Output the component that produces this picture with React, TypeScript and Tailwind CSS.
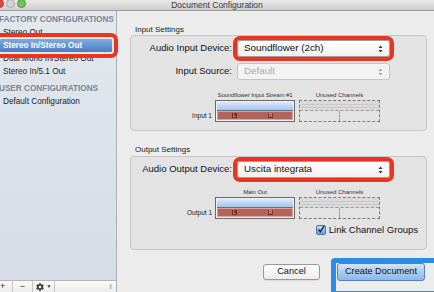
import { FaCog } from "react-icons/fa";

function Arrows() {
  return (
    <svg width="5" height="8" viewBox="0 0 5 8" className="shrink-0">
      <path d="M2.5 0.5 L4.5 3 L0.5 3 Z" fill="#333" />
      <path d="M2.5 7.5 L4.5 5 L0.5 5 Z" fill="#333" />
    </svg>
  );
}

function ChannelBar() {
  return (
    <div className="w-[80px] h-[22px] border border-[#6a6a6a] flex flex-col bg-[#f0f0f0] p-px">
      <div className="h-[9px] bg-gradient-to-b from-[#dbe9f9] to-[#a3c5eb] border-b border-[#5d7190]" />
      <div className="flex-1 bg-[#b4645b] border border-[#d9a39c] flex items-center">
        <span className="ml-[14px] bg-[#6b2f27] text-[#f2d6d2] text-[5px] leading-[5px] px-[1px]">L</span>
        <span className="ml-[31px] bg-[#6b2f27] text-[#f2d6d2] text-[5px] leading-[5px] px-[1px]">R</span>
      </div>
    </div>
  );
}

function UnusedBox() {
  return (
    <div className="w-[81px] h-[22px] border border-dashed border-[#7a7a7a] flex flex-col">
      <div className="h-[10px] bg-[#dadada] border-b border-dashed border-[#9a9a9a] flex flex-col justify-center gap-[2px] px-[1px]">
        <div className="h-px bg-[#c9c9c9]" />
        <div className="h-px bg-[#c9c9c9]" />
      </div>
      <div className="flex-1 flex">
        <div className="w-[40px] border-r border-dashed border-[#9a9a9a]" />
        <div className="flex-1" />
      </div>
    </div>
  );
}

function Channels({ title, label }: { title: string; label: string }) {
  return (
    <div className="flex flex-col">
      <div className="flex text-[6px] leading-[10px] text-[#333]">
        <div className="w-[81px]" />
        <div className="ml-[3px] w-[80px] text-center whitespace-nowrap tracking-[-0.1px]">{title}</div>
        <div className="ml-[4px] w-[81px] text-center">Unused Channels</div>
      </div>
      <div className="flex items-end">
        <div className="w-[81px] text-right text-[6.5px] leading-[8px] pb-[2px] text-[#222]">{label}</div>
        <div className="ml-[3px]">
          <ChannelBar />
        </div>
        <div className="ml-[4px]">
          <UnusedBox />
        </div>
      </div>
    </div>
  );
}

function Select({ value, disabled, highlight, width }: { value: string; disabled?: boolean; highlight?: boolean; width: string }) {
  return (
    <div
      className={`${width} h-[17px] rounded-[3px] border flex items-center justify-between pl-[6px] pr-[6px] text-[9.8px] ${
        disabled
          ? "border-[#c4c4c4] bg-[#f3f3f3] text-[#a9a9a9] h-[15px]"
          : "border-[#9c9c9c] bg-gradient-to-b from-white to-[#f0f0f0] text-[#111]"
      } ${highlight ? "outline-[4px] outline-solid outline-[#e9341f] outline-offset-[0px]" : ""}`}
    >
      <span>{value}</span>
      {disabled ? (
        <span className="opacity-40">
          <Arrows />
        </span>
      ) : (
        <Arrows />
      )}
    </div>
  );
}

export default function App() {
  return (
    <div className="w-[434px] h-[292px] overflow-hidden flex flex-col bg-[#ececec] font-['Liberation_Sans',Arial,sans-serif] text-[#111]">
      {/* TITLE BAR */}
      <div className="h-[11px] shrink-0 relative flex items-center bg-gradient-to-b from-[#e9e9e9] to-[#cdcdcd] border-b border-[#9d9d9d]">
        <div className="flex gap-[2px] ml-[-5px] mt-[-3px]">
          <div className="w-[9px] h-[9px] rounded-full bg-[#e0483e] border border-[#b53a32]" />
          <div className="w-[9px] h-[9px] rounded-full bg-[#d4d4d4] border border-[#a9a9a9]" />
          <div className="w-[9px] h-[9px] rounded-full bg-[#71c553] border border-[#4f9a3a]" />
        </div>
        <div className="absolute inset-0 text-center text-[8.5px] leading-[11px] text-[#3a3a3a]">Document Configuration</div>
      </div>

      <div className="flex flex-1 min-h-0">
        {/* SIDEBAR */}
        <div className="w-[117px] shrink-0 flex flex-col border-r border-[#a7b0bb] bg-gradient-to-b from-[#e3e8ee] to-[#d5dce5]">
          <div className="flex-1 pt-[3px] text-[8.2px]">
            <div className="h-[12px] leading-[12px] ml-[-1px] font-bold text-[8.2px] text-[#7b8591]">FACTORY CONFIGURATIONS</div>
            <div className="h-[13px] leading-[13px] pl-[3px] text-[#222]">Stereo Out</div>
            <div className="h-[13px] leading-[13px] pl-[3px] mr-[4px] font-bold text-white bg-gradient-to-b from-[#7eaadf] to-[#4a7fc6] outline-[4px] outline-solid outline-[#e9341f] outline-offset-[2px] rounded-[1px]">
              Stereo In/Stereo Out
            </div>
            <div className="h-[13px] leading-[13px] pl-[3px] text-[#222]">Dual Mono In/Stereo Out</div>
            <div className="h-[13px] leading-[13px] pl-[3px] text-[#222]">Stereo In/5.1 Out</div>
            <div className="h-[12px] leading-[12px] mt-[5px] ml-[-1px] font-bold text-[8.2px] text-[#7b8591]">USER CONFIGURATIONS</div>
            <div className="h-[13px] leading-[13px] pl-[3px] text-[#222]">Default Configuration</div>
          </div>
          <div className="h-[12px] shrink-0 flex items-center border-t border-[#b3b3b3] bg-gradient-to-b from-[#fbfbfb] to-[#ececec] text-[9px] text-[#333]">
            <div className="w-[13px] h-full border-r border-[#c4c4c4] flex items-center justify-start leading-none">+</div>
            <div className="w-[20px] h-full border-r border-[#c4c4c4] flex items-center justify-center leading-none">−</div>
            <div className="w-[22px] h-full border-r border-[#c4c4c4] flex items-center justify-center gap-[3px]">
              <FaCog size={8} color="#3c3c3c" />
              <span className="text-[5px]">▼</span>
            </div>
            <div className="flex-1 flex justify-end pr-[5px] text-[6px] text-[#aaa] tracking-[-1px]">|||</div>
          </div>
        </div>

        {/* MAIN */}
        <div className="flex-1 pl-[13px] pr-[7px] pt-[14px]">
          <div className="pl-[5px] text-[8px] leading-[10px] text-[#222]">Input Settings</div>
          <div className="h-[96px] rounded-[4px] border border-[#c6c6c6] bg-[#e3e3e3] pt-[4px]">
            <div className="flex items-center">
              <div className="w-[101px] text-right text-[9.5px]">Audio Input Device:</div>
              <div className="ml-[5px]">
                <Select value="Soundflower (2ch)" highlight width="w-[153px]" />
              </div>
            </div>
            <div className="flex items-center mt-[6px]">
              <div className="w-[101px] text-right text-[9.5px]">Input Source:</div>
              <div className="ml-[5px]">
                <Select value="Default" disabled width="w-[153px]" />
              </div>
            </div>
            <div className="mt-[10px]">
              <Channels title="Soundflower Input Stream #1" label="Input 1" />
            </div>
          </div>

          <div className="pl-[5px] mt-[14px] text-[8px] leading-[10px] text-[#222]">Output Settings</div>
          <div className="h-[94px] mt-[1px] rounded-[4px] border border-[#c6c6c6] bg-[#e3e3e3] pt-[4px]">
            <div className="flex items-center">
              <div className="w-[101px] text-right text-[9.5px]">Audio Output Device:</div>
              <div className="ml-[5px]">
                <Select value="Uscita integrata" highlight width="w-[153px]" />
              </div>
            </div>
            <div className="mt-[9px]">
              <Channels title="Main Out" label="Output 1" />
            </div>
            <div className="flex justify-end items-center pr-[8px] mt-[5px] gap-[3px]">
              <div className="w-[10px] h-[10px] rounded-[2px] border border-[#4a74ad] bg-gradient-to-b from-[#c9dcf3] to-[#6d9bd6] flex items-center justify-center">
                <svg width="9" height="9" viewBox="0 0 9 9">
                  <path d="M1.5 4.5 L3.8 7 L8 0.5" fill="none" stroke="#1b2a40" strokeWidth="1.6" />
                </svg>
              </div>
              <span className="text-[9.5px] leading-[11px]">Link Channel Groups</span>
            </div>
          </div>

          <div className="flex justify-end items-center gap-[17px] mt-[13px] pr-[2px]">
            <div className="w-[57px] h-[16px] rounded-[3px] border border-[#9a9a9a] bg-gradient-to-b from-white to-[#ececec] flex items-center justify-center text-[9.2px] shadow-[0_1px_0_rgba(0,0,0,0.08)]">
              Cancel
            </div>
            <div className="relative w-[88px] h-[18px] rounded-[3px] border border-[#5b7fb2] bg-gradient-to-b from-[#d5e6f8] via-[#a9cbef] to-[#8bb9ea] flex items-center justify-center text-[9.2px]">
              Create Document
              {/* highlight annotation */}
              <span className="absolute left-[-7px] top-[-6px] right-[-16px] bottom-[-16px] rounded-[4px] border-[5px] border-[#2b8de6] pointer-events-none" />
            </div>
          </div>
        </div>
      </div>
    </div>
  );
}
